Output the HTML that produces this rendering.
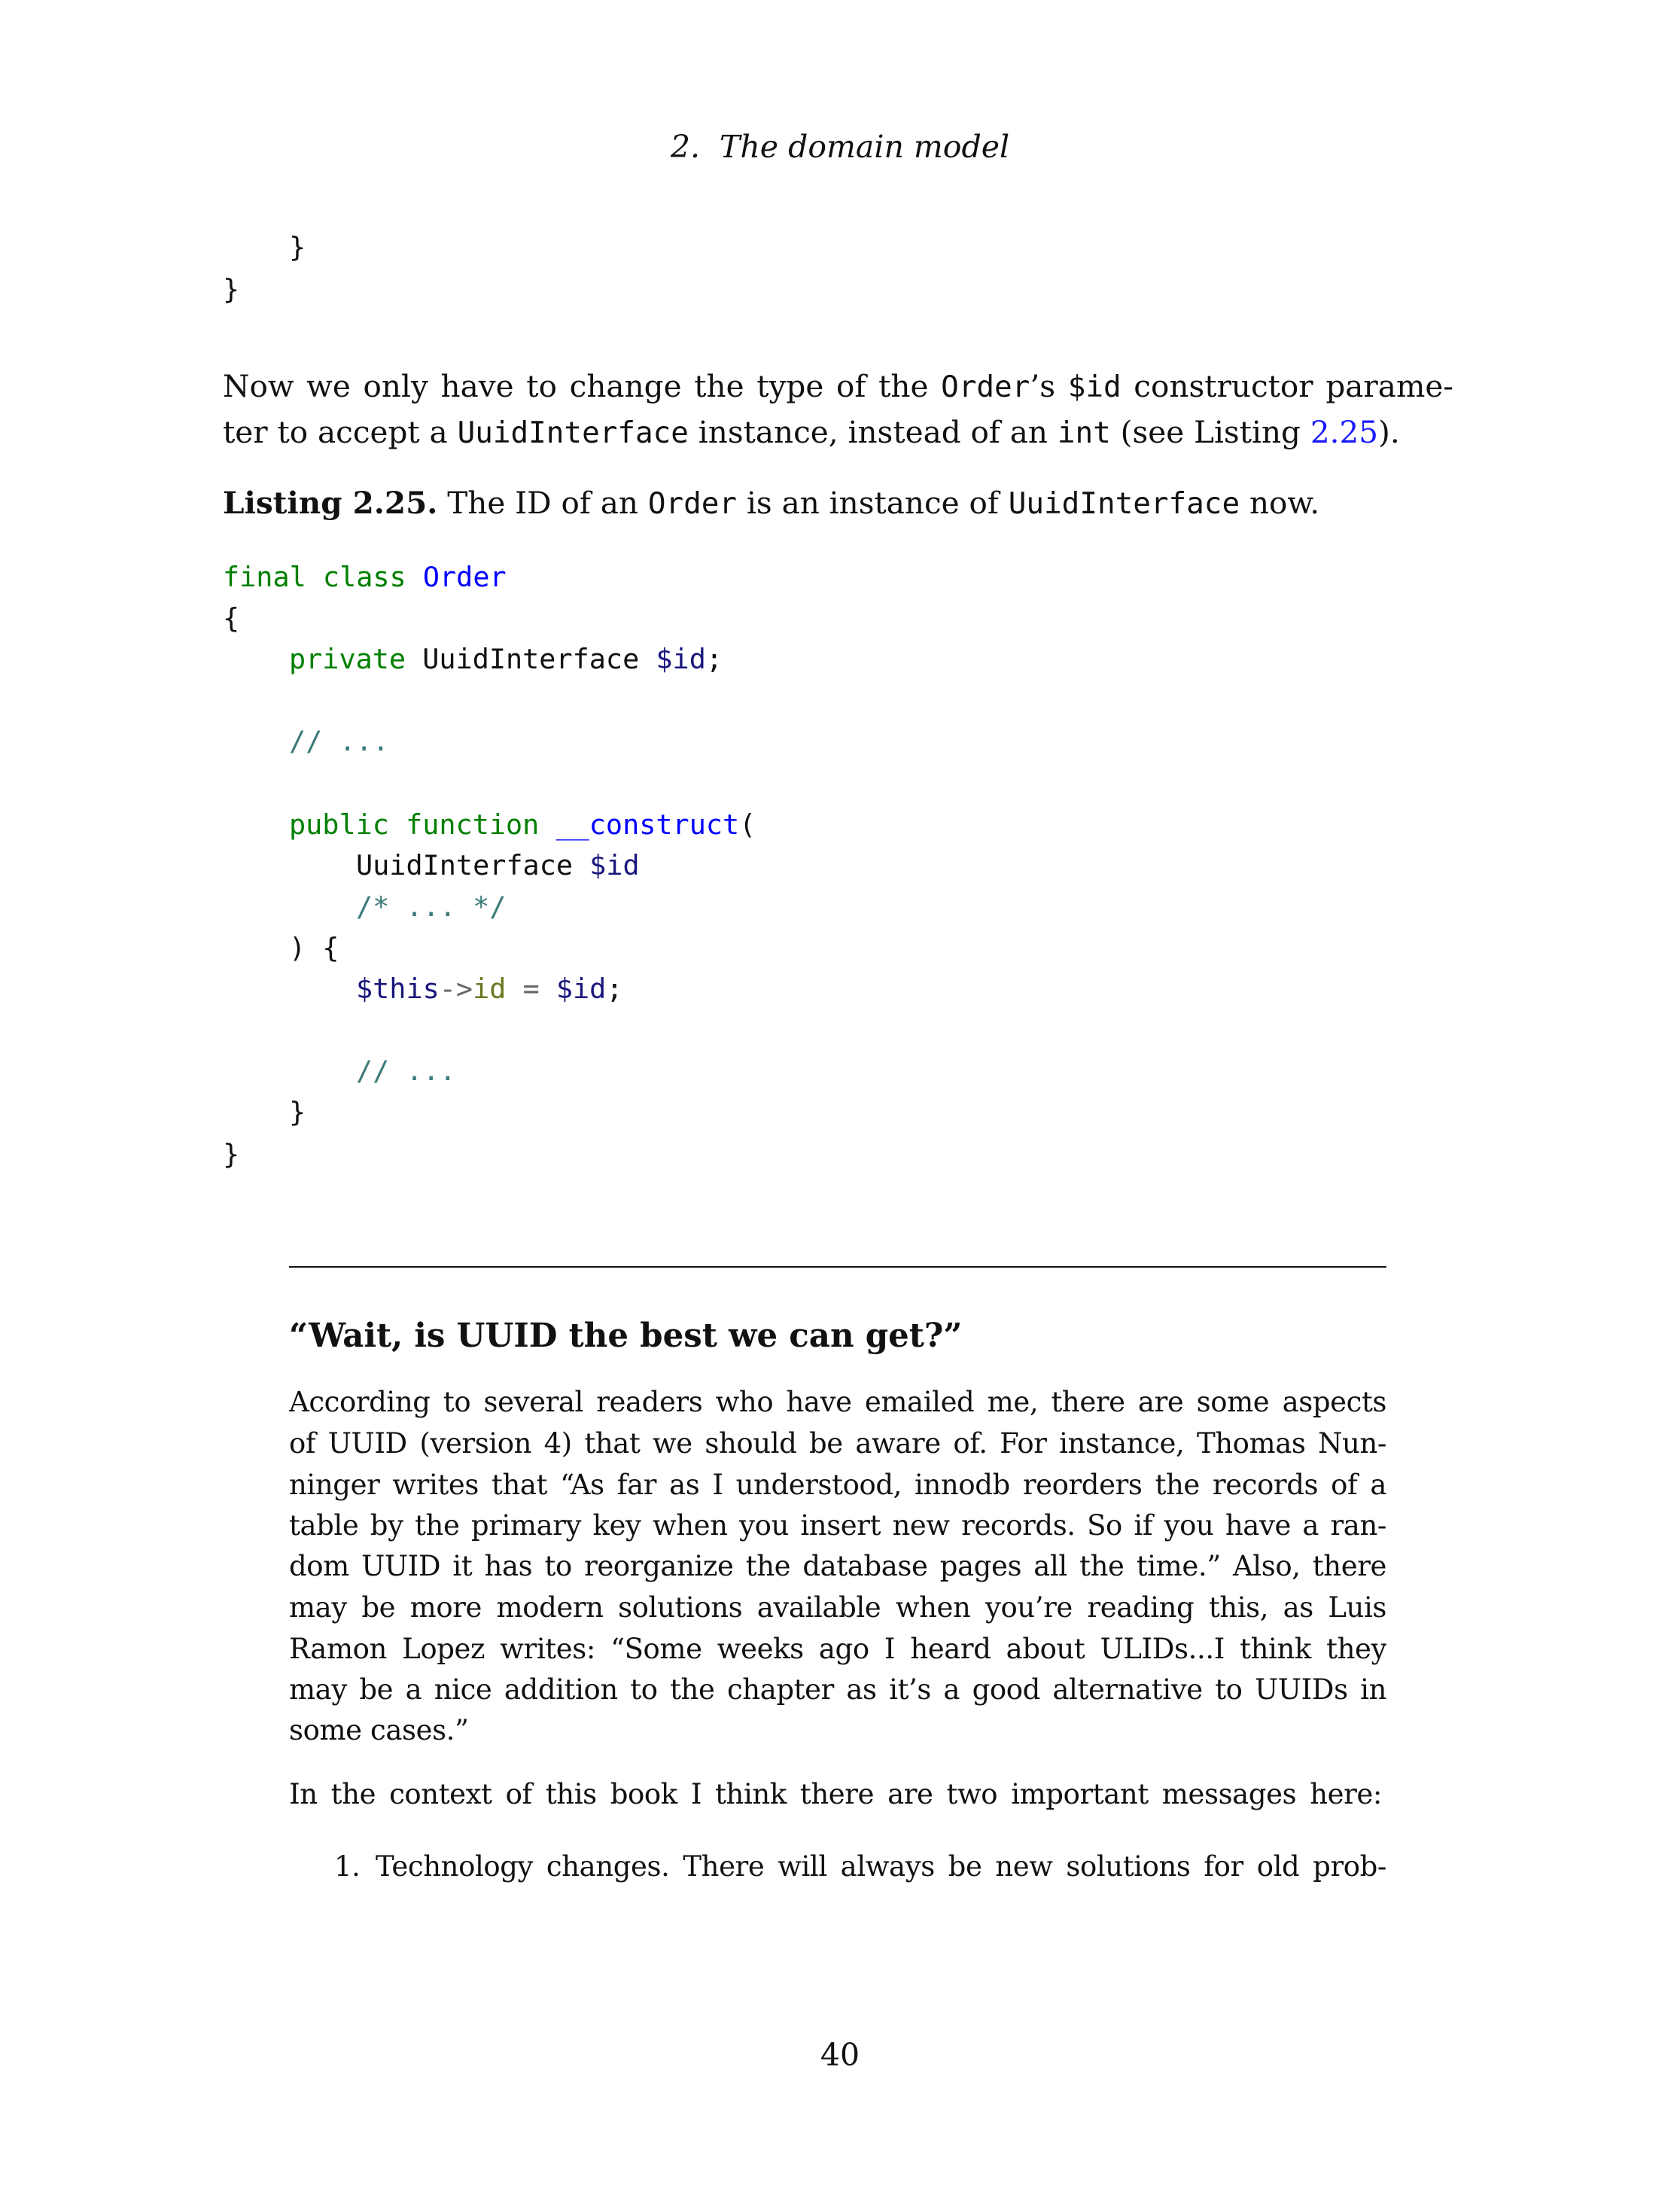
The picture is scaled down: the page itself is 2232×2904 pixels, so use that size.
<!DOCTYPE html>
<html><head><meta charset="utf-8"><style>
html,body{margin:0;padding:0;background:#fff}
body{width:2232px;height:2904px;position:relative;overflow:hidden;font-family:"DejaVu Serif","Liberation Serif",serif;color:#111}
.l{position:absolute;white-space:nowrap}
.b{font-size:40.5px;line-height:63px;height:63px}
.s{font-size:37px;letter-spacing:-0.4px;line-height:55px;height:55px}
.j{text-align:justify;text-align-last:justify;white-space:normal;overflow:hidden}
.c{font-family:"DejaVu Sans Mono","Liberation Mono",monospace;font-size:36.8px;line-height:55px;height:55px;color:#111}
tt{font-family:"DejaVu Sans Mono","Liberation Mono",monospace;font-size:0.97em}
.k{color:#008000}.n{color:#0000ff}.v{color:#19177c}.cm{color:#3d7b7b}.o{color:#666}.a{color:#687822}
</style></head><body>
<div class="l" style="left:0;width:2232px;top:164px;text-align:center;font-size:41px;line-height:63px;font-style:italic">2.&nbsp; The domain model</div>

<div class="l c" style="left:384px;top:301px">}</div>
<div class="l c" style="left:296px;top:357px">}</div>

<div class="l b j" style="left:296px;width:1635px;top:482px">Now we only have to change the type of the <tt>Order</tt>’s <tt>$id</tt> constructor parame-</div>
<div class="l b" style="left:296px;top:543px">ter to accept a <tt>UuidInterface</tt> instance, instead of an <tt>int</tt> (see Listing <span style="color:#1a1aff">2.25</span>).</div>
<div class="l b" style="left:296px;top:637px"><b>Listing 2.25.</b> The ID of an <tt>Order</tt> is an instance of <tt>UuidInterface</tt> now.</div>

<div class="l c" style="left:296px;top:739px"><span class="k">final class</span> <span class="n">Order</span></div>
<div class="l c" style="left:296px;top:794px">{</div>
<div class="l c" style="left:384px;top:848px"><span class="k">private</span> UuidInterface <span class="v">$id</span>;</div>
<div class="l c" style="left:384px;top:957px"><span class="cm">// ...</span></div>
<div class="l c" style="left:384px;top:1068px"><span class="k">public function</span> <span class="n">__construct</span>(</div>
<div class="l c" style="left:473px;top:1122px">UuidInterface <span class="v">$id</span></div>
<div class="l c" style="left:473px;top:1177px"><span class="cm">/* ... */</span></div>
<div class="l c" style="left:384px;top:1232px">) {</div>
<div class="l c" style="left:473px;top:1286px"><span class="v">$this</span><span class="o">-&gt;</span><span class="a">id</span> <span class="o">=</span> <span class="v">$id</span>;</div>
<div class="l c" style="left:473px;top:1395px"><span class="cm">// ...</span></div>
<div class="l c" style="left:384px;top:1450px">}</div>
<div class="l c" style="left:296px;top:1506px">}</div>

<div style="position:absolute;left:384px;width:1458px;top:1682px;height:2px;background:#111"></div>
<div class="l" style="left:384px;top:1743px;font-size:43.5px;line-height:64px;font-weight:bold">“Wait, is UUID the best we can get?”</div>

<div class="l s j" style="left:384px;width:1458px;top:1835px">According to several readers who have emailed me, there are some aspects</div>
<div class="l s j" style="left:384px;width:1458px;top:1890px">of UUID (version 4) that we should be aware of. For instance, Thomas Nun-</div>
<div class="l s j" style="left:384px;width:1458px;top:1945px">ninger writes that “As far as I understood, innodb reorders the records of a</div>
<div class="l s j" style="left:384px;width:1458px;top:1999px">table by the primary key when you insert new records. So if you have a ran-</div>
<div class="l s j" style="left:384px;width:1458px;top:2053px">dom UUID it has to reorganize the database pages all the time.” Also, there</div>
<div class="l s j" style="left:384px;width:1458px;top:2108px">may be more modern solutions available when you’re reading this, as Luis</div>
<div class="l s j" style="left:384px;width:1458px;top:2163px">Ramon Lopez writes: “Some weeks ago I heard about ULIDs...I think they</div>
<div class="l s j" style="left:384px;width:1458px;top:2217px">may be a nice addition to the chapter as it’s a good alternative to UUIDs in</div>
<div class="l s" style="left:384px;top:2271px">some cases.”</div>
<div class="l s j" style="left:384px;width:1452px;top:2356px">In the context of this book I think there are two important messages here:</div>
<div class="l s" style="left:444px;top:2452px">1.</div>
<div class="l s j" style="left:499px;width:1343px;top:2452px">Technology changes. There will always be new solutions for old prob-</div>

<div class="l" style="left:0;width:2232px;top:2699px;text-align:center;font-size:41px;line-height:63px">40</div>
</body></html>
